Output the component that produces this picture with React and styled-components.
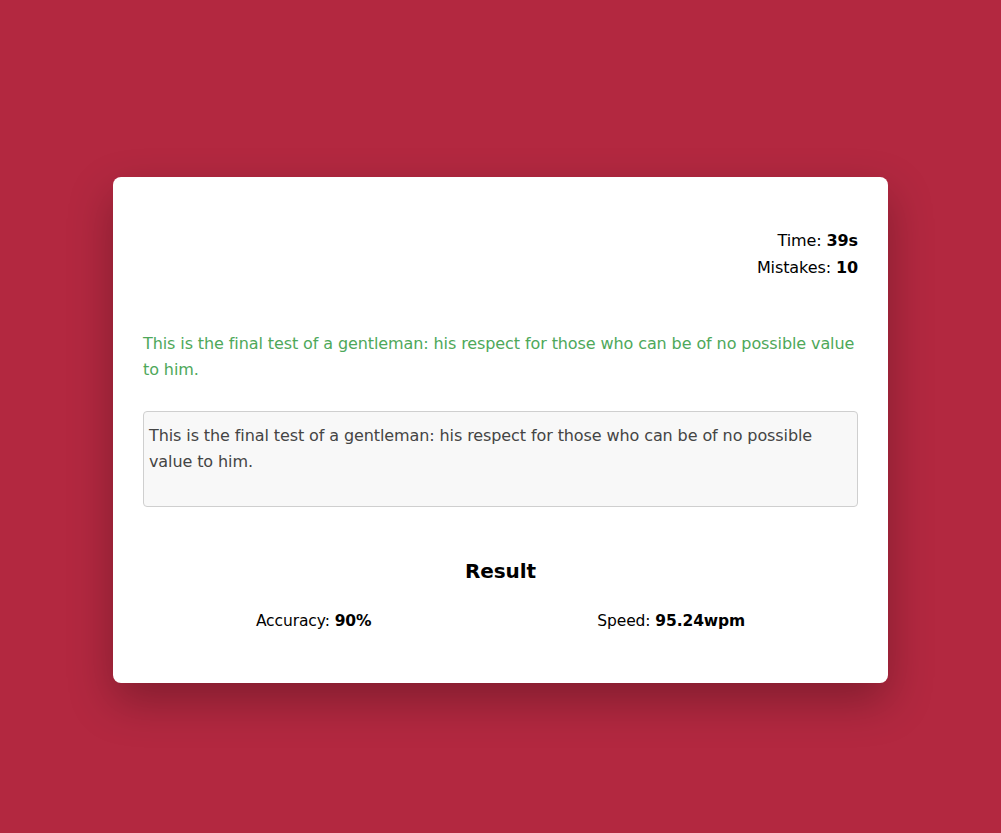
import React from "react";
import styled, { createGlobalStyle } from "styled-components";

const GlobalStyle = createGlobalStyle`
  *, *::before, *::after { box-sizing: border-box; }
  html, body { margin: 0; padding: 0; }
  body {
    background: #b32840;
    font-family: "DejaVu Sans", "Noto Sans", sans-serif;
    color: #000;
  }
`;

const Page = styled.main`
  min-height: 100vh;
  display: flex;
  justify-content: center;
  align-items: flex-start;
  padding-top: 177px;
`;

const Card = styled.section`
  width: 775px;
  background: #fff;
  border-radius: 8px;
  padding: 30px;
  box-shadow: 0 18px 45px rgba(0, 0, 0, 0.28);
  letter-spacing: -0.1px;
`;

const Stats = styled.div`
  margin-top: 20px;
  text-align: right;
  font-size: 16px;
  line-height: 27px;
`;

const Stat = styled.div``;

const Strong = styled.strong`
  font-weight: 700;
`;

const Quote = styled.p`
  margin: 50px 0 0;
  color: #4ea85a;
  font-size: 16px;
  line-height: 26px;
`;

const TypeArea = styled.textarea`
  display: block;
  width: 100%;
  height: 96px;
  margin-top: 28px;
  padding: 11px 5px 10px;
  border: 1px solid #cfcfcf;
  border-radius: 4px;
  background: #f8f8f8;
  color: #444;
  font-family: inherit;
  font-size: 16px;
  line-height: 26px;
  letter-spacing: -0.1px;
  resize: none;
  outline: none;
`;

const ResultTitle = styled.h2`
  margin: 49px 0 0;
  text-align: center;
  font-size: 20px;
  line-height: 30px;
  font-weight: 700;
`;

const ResultRow = styled.div`
  display: flex;
  justify-content: space-around;
  margin-top: 22px;
  margin-bottom: 19px;
  font-size: 15.5px;
  line-height: 26px;
`;

const ResultItem = styled.div``;

const quote =
  "This is the final test of a gentleman: his respect for those who can be of no possible value to him.";

export default function App() {
  return (
    <>
      <GlobalStyle />
      <Page>
        <Card>
          <Stats>
            <Stat>
              Time: <Strong>39s</Strong>
            </Stat>
            <Stat>
              Mistakes: <Strong>10</Strong>
            </Stat>
          </Stats>
          <Quote>{quote}</Quote>
          <TypeArea defaultValue={quote} />
          <ResultTitle>Result</ResultTitle>
          <ResultRow>
            <ResultItem>
              Accuracy: <Strong>90%</Strong>
            </ResultItem>
            <ResultItem>
              Speed: <Strong>95.24wpm</Strong>
            </ResultItem>
          </ResultRow>
        </Card>
      </Page>
    </>
  );
}
